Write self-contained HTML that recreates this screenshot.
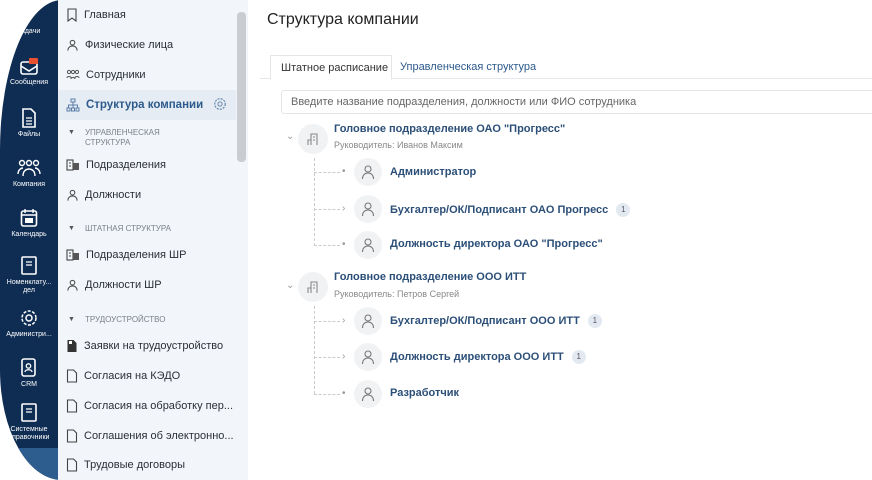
<!DOCTYPE html>
<html><head><meta charset="utf-8"><style>
*{margin:0;padding:0;box-sizing:border-box}
body{width:872px;height:480px;background:#fff;font-family:"Liberation Sans",sans-serif;overflow:hidden;position:relative}
.frame{position:absolute;left:0;top:0;width:872px;height:480px;overflow:hidden;border-top-left-radius:62px 150px;border-bottom-left-radius:62px 110px;background:#fff}
.dark{position:absolute;left:0;top:0;width:58px;height:480px;background:#0f2d53}
.dark .sel{position:absolute;left:0;top:448px;width:58px;height:32px;background:#2d5d8f}
.ni{position:absolute;left:0;width:58px;text-align:center;color:#fff;font-size:7px;line-height:8px}
.ni svg{display:block;margin:0 auto 3px}
.side{position:absolute;left:58px;top:0;width:190px;height:480px;background:#f2f5f9}
.scroll{position:absolute;left:237px;top:12px;width:9px;height:150px;background:#c9ccd0;border-radius:4px}
.it{position:absolute;left:66px;font-size:11px;color:#2a2f36;display:flex;align-items:center;height:20px;white-space:nowrap}
.it svg{margin-right:6px;flex:none}
.grp{position:absolute;left:68px;font-size:8px;color:#7b818a;display:flex;align-items:flex-start;line-height:10px}
.grp b{font-size:7px;margin-right:10px;color:#555;font-weight:normal}
.active{position:absolute;left:58px;top:90px;width:178px;height:30px;background:#e6ecf3}
h1{position:absolute;left:267px;top:11px;font-size:16px;font-weight:normal;color:#222}
.tabs{position:absolute;left:260px;top:55px;width:612px;height:24px;border-bottom:1px solid #e6e8eb}
.tab1{position:absolute;left:10px;top:0;width:122px;height:25px;border:1px solid #e3e5e8;border-bottom:1px solid #fff;background:#fff;font-size:11px;color:#333;padding:6px 0 0 10px}
.tab2{position:absolute;left:140px;top:6px;font-size:11px;color:#2c5a8c}
.search{position:absolute;left:281px;top:90px;width:600px;height:24px;border:1px solid #e3e5e8;border-radius:3px;font-size:11px;color:#666;padding:5px 0 0 9px}
.circ{position:absolute;width:28px;height:28px;border-radius:50%;background:#f1f2f4;display:flex;align-items:center;justify-content:center}
.t{position:absolute;font-size:11px;font-weight:bold;color:#2c4f78;white-space:nowrap}
.s{position:absolute;font-size:9px;color:#888}
.badge{display:inline-block;margin-left:8px;width:14px;height:14px;border-radius:50%;background:#e3e9f1;color:#556;font-size:8px;text-align:center;line-height:14px;font-weight:normal;vertical-align:middle}
.arr{position:absolute;font-size:10px;color:#999}
.vl{position:absolute;border-left:1px dashed #ccc}
.hl{position:absolute;border-top:1px dashed #ccc;width:26px}
</style></head><body>
<svg width="0" height="0" style="position:absolute"><defs>
<symbol id="p" viewBox="0 0 16 16"><circle cx="8" cy="5" r="3" fill="none" stroke="#777" stroke-width="1.1"/><path d="M2.5 15c0-4 2.5-6 5.5-6s5.5 2 5.5 6" fill="none" stroke="#777" stroke-width="1.1"/></symbol>
<symbol id="b" viewBox="0 0 16 16"><path d="M6 14V3h6v11M3 14V9h3M8 6h2M8 9h2" fill="none" stroke="#888" stroke-width="1.1"/></symbol>
<symbol id="d" viewBox="0 0 12 14"><path d="M1.5 1h6l3 3v9h-9z" fill="none" stroke="#444" stroke-width="1.1"/></symbol>
<symbol id="u" viewBox="0 0 14 14"><circle cx="7" cy="4.5" r="2.5" fill="none" stroke="#444" stroke-width="1.1"/><path d="M2 13c0-3 2-5 5-5s5 2 5 5" fill="none" stroke="#444" stroke-width="1.1"/></symbol>
<symbol id="h" viewBox="0 0 14 14"><rect x="1" y="2" width="6" height="10" fill="none" stroke="#444" stroke-width="1.1"/><rect x="7" y="5" width="6" height="7" fill="#555"/><path d="M3 5h2M3 8h2" stroke="#444"/></symbol>
</defs></svg>
<div class="frame">
<div class="dark"><div class="sel"></div>
<div class="ni" style="top:28px">задачи</div>
<div class="ni" style="top:58px"><svg width="20" height="18" viewBox="0 0 20 18"><rect x="2" y="4" width="16" height="12" rx="2" fill="none" stroke="#fff" stroke-width="1.6"/><path d="M2 8l8 5 8-5" fill="none" stroke="#fff" stroke-width="1.6"/><rect x="10" y="0" width="9" height="6" rx="1" fill="#e8502f"/></svg>Сообщения</div>
<div class="ni" style="top:108px"><svg width="16" height="20" viewBox="0 0 16 20"><path d="M2 1h8l4 4v14H2z" fill="none" stroke="#fff" stroke-width="1.6"/><path d="M5 10h6M5 13h6M5 16h6" stroke="#fff" stroke-width="1.3"/></svg>Файлы</div>
<div class="ni" style="top:158px"><svg width="24" height="20" viewBox="0 0 24 20"><circle cx="5" cy="5" r="2.5" fill="none" stroke="#fff" stroke-width="1.4"/><circle cx="12" cy="5" r="2.5" fill="none" stroke="#fff" stroke-width="1.4"/><circle cx="19" cy="5" r="2.5" fill="none" stroke="#fff" stroke-width="1.4"/><path d="M1 16c0-4 3-6 5-6M23 16c0-4-3-6-5-6M6 18c0-5 3-7 6-7s6 2 6 7" fill="none" stroke="#fff" stroke-width="1.4"/></svg>Компания</div>
<div class="ni" style="top:208px"><svg width="18" height="20" viewBox="0 0 18 20"><rect x="1.5" y="3" width="15" height="15" rx="2" fill="none" stroke="#fff" stroke-width="1.6"/><path d="M5 1v4M13 1v4M1.5 7h15" stroke="#fff" stroke-width="1.4"/><rect x="5" y="10" width="8" height="5" fill="#fff"/></svg>Календарь</div>
<div class="ni" style="top:256px"><svg width="18" height="20" viewBox="0 0 18 20"><rect x="2" y="1" width="14" height="17" rx="1" fill="none" stroke="#fff" stroke-width="1.6"/><path d="M6 6h6M6 9h6" stroke="#fff" stroke-width="1.3"/></svg>Номенклату...<br>дел</div>
<div class="ni" style="top:308px"><svg width="20" height="20" viewBox="0 0 20 20"><circle cx="10" cy="10" r="3" fill="none" stroke="#fff" stroke-width="1.5"/><circle cx="10" cy="10" r="7" fill="none" stroke="#fff" stroke-width="1.5" stroke-dasharray="3 1.5"/></svg>Администри...</div>
<div class="ni" style="top:358px"><svg width="18" height="20" viewBox="0 0 18 20"><rect x="2" y="1" width="13" height="17" rx="2" fill="none" stroke="#fff" stroke-width="1.6"/><circle cx="8.5" cy="8" r="2.2" fill="none" stroke="#fff" stroke-width="1.3"/><path d="M5 14c0-3 7-3 7 0" fill="none" stroke="#fff" stroke-width="1.3"/></svg>CRM</div>
<div class="ni" style="top:403px"><svg width="18" height="20" viewBox="0 0 18 20"><rect x="2" y="1" width="14" height="17" rx="1" fill="none" stroke="#fff" stroke-width="1.6"/><path d="M6 6h6M6 9h6" stroke="#fff" stroke-width="1.3"/></svg>Системные<br>справочники</div>
</div>
<div class="side"></div>
<div class="active"></div>
<div class="scroll"></div>
<div class="it" style="top:5px"><svg width="12" height="14"><path d="M2 1h8v12l-4-3-4 3z" fill="none" stroke="#444" stroke-width="1.1"/></svg>Главная</div>
<div class="it" style="top:35px"><svg width="13" height="14"><use href="#u"/></svg>Физические лица</div>
<div class="it" style="top:65px"><svg width="14" height="14" viewBox="0 0 14 14"><circle cx="3" cy="4" r="1.6" fill="none" stroke="#555"/><circle cx="7" cy="4" r="1.6" fill="none" stroke="#555"/><circle cx="11" cy="4" r="1.6" fill="none" stroke="#555"/><path d="M1 10c0-2 4-2 4 0M5 11c0-2 4-2 4 0M9 10c0-2 4-2 4 0" fill="none" stroke="#555"/></svg>Сотрудники</div>
<div class="it" style="top:95px;color:#2c5a8c;font-weight:bold;font-size:11.5px"><svg width="14" height="14" viewBox="0 0 14 14"><rect x="5" y="1" width="4" height="3" fill="none" stroke="#5a7ea8"/><rect x="1" y="10" width="3" height="3" fill="none" stroke="#5a7ea8"/><rect x="5.5" y="10" width="3" height="3" fill="none" stroke="#5a7ea8"/><rect x="10" y="10" width="3" height="3" fill="none" stroke="#5a7ea8"/><path d="M7 4v6M2.5 10V7h9v3" fill="none" stroke="#5a7ea8"/></svg>Структура компании</div>
<svg style="position:absolute;left:213px;top:97px" width="14" height="14" viewBox="0 0 20 20"><circle cx="10" cy="10" r="3" fill="none" stroke="#6a8cb0" stroke-width="1.5"/><circle cx="10" cy="10" r="7.5" fill="none" stroke="#6a8cb0" stroke-width="1.8" stroke-dasharray="3 1.5"/></svg>
<div class="grp" style="top:128px"><b>▼</b>УПРАВЛЕНЧЕСКАЯ<br>СТРУКТУРА</div>
<div class="it" style="top:155px"><svg width="14" height="14"><use href="#h"/></svg>Подразделения</div>
<div class="it" style="top:185px"><svg width="13" height="14"><use href="#u"/></svg>Должности</div>
<div class="grp" style="top:224px"><b>▼</b>ШТАТНАЯ СТРУКТУРА</div>
<div class="it" style="top:245px"><svg width="14" height="14"><use href="#h"/></svg>Подразделения ШР</div>
<div class="it" style="top:275px"><svg width="13" height="14"><use href="#u"/></svg>Должности ШР</div>
<div class="grp" style="top:315px"><b>▼</b>ТРУДОУСТРОЙСТВО</div>
<div class="it" style="top:336px"><svg width="12" height="14" viewBox="0 0 12 14"><path d="M1.5 1h6l3 3v9h-9z" fill="#333"/><rect x="3" y="2" width="3" height="3" fill="#fff"/></svg>Заявки на трудоустройство</div>
<div class="it" style="top:366px"><svg width="12" height="14"><use href="#d"/></svg>Согласия на КЭДО</div>
<div class="it" style="top:396px"><svg width="12" height="14"><use href="#d"/></svg>Согласия на обработку пер...</div>
<div class="it" style="top:426px"><svg width="12" height="14"><use href="#d"/></svg>Соглашения об электронно...</div>
<div class="it" style="top:455px"><svg width="12" height="14"><use href="#d"/></svg>Трудовые договоры</div>

<h1>Структура компании</h1>
<div class="tabs"><div class="tab1">Штатное расписание</div><div class="tab2">Управленческая структура</div></div>
<div class="search">Введите название подразделения, должности или ФИО сотрудника</div>

<div class="arr" style="left:286px;top:131px">⌄</div>
<div class="circ" style="left:298px;top:124px;width:30px;height:30px"><svg width="16" height="16"><use href="#b"/></svg></div>
<div class="t" style="left:334px;top:123px">Головное подразделение ОАО "Прогресс"</div>
<div class="s" style="left:334px;top:140px">Руководитель: Иванов Максим</div>
<div class="vl" style="left:314px;top:158px;height:88px"></div>
<div class="hl" style="left:314px;top:172px"></div><div class="hl" style="left:314px;top:209px"></div><div class="hl" style="left:314px;top:245px"></div>
<div class="arr" style="left:342px;top:166px">•</div><div class="circ" style="left:354px;top:158px"><svg width="16" height="16"><use href="#p"/></svg></div><div class="t" style="left:390px;top:166px">Администратор</div>
<div class="arr" style="left:342px;top:203px">›</div><div class="circ" style="left:354px;top:195px"><svg width="16" height="16"><use href="#p"/></svg></div><div class="t" style="left:390px;top:203px">Бухгалтер/ОК/Подписант ОАО Прогресс<span class="badge">1</span></div>
<div class="arr" style="left:342px;top:239px">•</div><div class="circ" style="left:354px;top:231px"><svg width="16" height="16"><use href="#p"/></svg></div><div class="t" style="left:390px;top:238px">Должность директора ОАО "Прогресс"</div>

<div class="arr" style="left:286px;top:280px">⌄</div>
<div class="circ" style="left:298px;top:272px;width:30px;height:30px"><svg width="16" height="16"><use href="#b"/></svg></div>
<div class="t" style="left:334px;top:271px">Головное подразделение ООО ИТТ</div>
<div class="s" style="left:334px;top:289px">Руководитель: Петров Сергей</div>
<div class="vl" style="left:314px;top:306px;height:88px"></div>
<div class="hl" style="left:314px;top:321px"></div><div class="hl" style="left:314px;top:357px"></div><div class="hl" style="left:314px;top:394px"></div>
<div class="arr" style="left:342px;top:315px">›</div><div class="circ" style="left:354px;top:307px"><svg width="16" height="16"><use href="#p"/></svg></div><div class="t" style="left:390px;top:314px">Бухгалтер/ОК/Подписант ООО ИТТ<span class="badge">1</span></div>
<div class="arr" style="left:342px;top:351px">›</div><div class="circ" style="left:354px;top:343px"><svg width="16" height="16"><use href="#p"/></svg></div><div class="t" style="left:390px;top:350px">Должность директора ООО ИТТ<span class="badge">1</span></div>
<div class="arr" style="left:342px;top:388px">•</div><div class="circ" style="left:354px;top:380px"><svg width="16" height="16"><use href="#p"/></svg></div><div class="t" style="left:390px;top:387px">Разработчик</div>
</div>
</body></html>
